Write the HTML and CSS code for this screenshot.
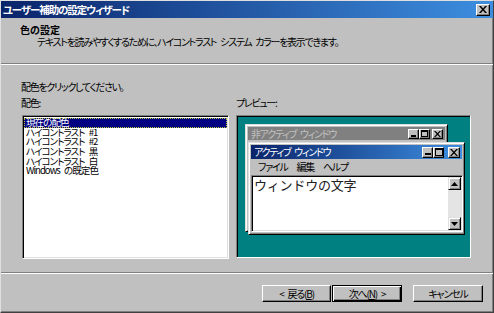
FILE: index.html
```html
<!DOCTYPE html>
<html lang="ja">
<head>
    <meta charset="UTF-8">
    <title>ユーザー補助の設定ウィザード</title>
    <link rel="stylesheet" href="styles.css">
</head>
<body>
    <div class="window">
        <div class="titlebar">
            <span class="title">ユーザー補助の設定ウィザード</span>
            <span class="cap-btn cap-close">
                <svg width="8" height="7" viewBox="0 0 8 7"><path d="M0 0h2l2 2.5L6 0h2L5 3.5 8 7H6L4 4.5 2 7H0l3-3.5z" fill="#000"/></svg>
            </span>
        </div>
        <div class="header">
            <div class="header-title">色の設定</div>
            <div class="header-sub">テキストを読みやすくするために、ハイコントラスト システム カラーを表示できます。</div>
        </div>
        <div class="sep"></div>
        <div class="content">
            <div class="prompt">配色をクリックしてください。</div>
            <div class="columns">
                <div class="col">
                    <div class="label">配色:</div>
                    <ul class="listbox">
                        <li class="selected">現在の配色</li>
                        <li>ハイコントラスト #1</li>
                        <li>ハイコントラスト #2</li>
                        <li>ハイコントラスト 黒</li>
                        <li>ハイコントラスト 白</li>
                        <li>Windows の既定色</li>
                    </ul>
                </div>
                <div class="col">
                    <div class="label">プレビュー:</div>
                    <div class="preview">
                        <div class="pwin pwin-inactive">
                            <div class="ptitle">
                                <span>非アクティブ ウィンドウ</span>
                                <span class="pbtns">
                                    <span class="mini-btn"><svg width="6" height="6" viewBox="0 0 6 6"><rect x="0" y="4" width="5" height="2" fill="#000"/></svg></span><span class="mini-btn"><svg width="7" height="7" viewBox="0 0 7 7"><path d="M0 0h7v7H0z M1 2v4h5V2z" fill="#000" fill-rule="evenodd"/></svg></span><span class="mini-btn mini-close"><svg width="7" height="6" viewBox="0 0 7 6"><path d="M0 0h1.5L3.5 2 5.5 0H7L4.3 3 7 6H5.5L3.5 4 1.5 6H0l2.7-3z" fill="#000"/></svg></span>
                                </span>
                            </div>
                        </div>
                        <div class="pwin pwin-active">
                            <div class="ptitle">
                                <span>アクティブ ウィンドウ</span>
                                <span class="pbtns">
                                    <span class="mini-btn"><svg width="6" height="6" viewBox="0 0 6 6"><rect x="0" y="4" width="6" height="2" fill="#000"/></svg></span><span class="mini-btn"><svg width="8" height="8" viewBox="0 0 8 8"><path d="M0 0h8v8H0z M1 2v5h6V2z" fill="#000" fill-rule="evenodd"/></svg></span><span class="mini-btn mini-close"><svg width="8" height="7" viewBox="0 0 8 7"><path d="M0 0h1.7L4 2.4 6.3 0H8L4.9 3.5 8 7H6.3L4 4.6 1.7 7H0l3.1-3.5z" fill="#000"/></svg></span>
                                </span>
                            </div>
                            <div class="pmenu">
                                <span>ファイル</span><span>編集</span><span>ヘルプ</span>
                            </div>
                            <div class="ptext">
                                <div class="ptext-body">ウィンドウの文字</div>
                                <div class="vscroll">
                                    <span class="arrow-btn"><svg width="7" height="4" viewBox="0 0 7 4"><path d="M3.5 0L7 4H0z" fill="#000"/></svg></span>
                                    <span class="track"></span>
                                    <span class="arrow-btn"><svg width="7" height="4" viewBox="0 0 7 4"><path d="M0 0h7L3.5 4z" fill="#000"/></svg></span>
                                </div>
                            </div>
                        </div>
                    </div>
                </div>
            </div>
        </div>
        <div class="sep sep-bottom"></div>
        <div class="buttons">
            <button class="btn btn-back">&lt; 戻る(<u>B</u>)</button>
            <button class="btn btn-default">次へ(<u>N</u>) &gt;</button>
            <button class="btn btn-cancel">キャンセル</button>
        </div>
    </div>
</body>
</html>
```

FILE: styles.css
```css
body {
    margin: 0;
    padding: 0;
    background-color: #c0c0c0;
    font-family: "Noto Sans CJK JP", "Noto Sans", sans-serif;
    font-size: 10px;
    font-feature-settings: "palt";
    letter-spacing: -1.3px;
    word-spacing: 3px;
    color: #000;
}
.window {
    width: 494px;
    height: 313px;
    box-sizing: border-box;
    background-color: #c0c0c0;
    border: 1px solid;
    border-color: #dfdfdf #404040 #404040 #dfdfdf;
    box-shadow: inset -1px -1px 0 #808080;
    display: flex;
    flex-direction: column;
}
.titlebar {
    height: 17px;
    background: linear-gradient(to right, #0a246a, #3d8ee0);
    display: flex;
    align-items: center;
    justify-content: space-between;
    padding: 0 3px 0 2px;
}
.title {
    color: #fff;
    font-weight: bold;
    font-size: 10.5px;
    letter-spacing: -1.1px;
    line-height: 17px;
}
.cap-btn {
    width: 12px;
    height: 10px;
    background-color: #c0c0c0;
    border: 1px solid;
    border-color: #fff #000 #000 #fff;
    box-shadow: inset -1px -1px 0 #808080;
    display: flex;
    align-items: center;
    justify-content: center;
}
.header {
    height: 45px;
    box-sizing: border-box;
    padding: 6px 0 0 19px;
    line-height: 12px;
}
.header-title {
    font-weight: bold;
    font-size: 10px;
    font-feature-settings: normal;
    letter-spacing: 0;
}
.header-sub {
    padding-left: 17px;
}
.sep {
    border-top: 1px solid #808080;
    border-bottom: 1px solid #fff;
}
.content {
    padding: 16px 0 0 20px;
    line-height: 12px;
}
.prompt {
    margin-bottom: 4px;
}
.columns {
    display: flex;
    gap: 7px;
}
.label {
    margin-bottom: 6px;
}
.listbox {
    list-style: none;
    margin: 0 0 0 1px;
    padding: 1px 1px;
    width: 207px;
    height: 144px;
    box-sizing: border-box;
    background-color: #fff;
    border: 1px solid;
    border-color: #808080 #fff #fff #808080;
    box-shadow: inset 1px 1px 0 #000, inset -1px -1px 0 #dfdfdf;
    font-size: 9.6px;
    line-height: 9.66px;
    letter-spacing: -1px;
}
.listbox li {
    padding: 0 2px;
    height: 9.66px;
}
.listbox li.selected {
    background-color: #000080;
    color: #fff;
    outline: 1px dotted #c0c040;
    outline-offset: -1px;
    margin-top: 1px;
}
.preview {
    position: relative;
    width: 235px;
    height: 143px;
    box-sizing: border-box;
    background-color: #008080;
    border: 1px solid;
    border-color: #808080 #fff #fff #808080;
    box-shadow: inset 1px 1px 0 #000;
}
.pwin {
    position: absolute;
    box-sizing: border-box;
    background-color: #c0c0c0;
    border: 1px solid;
    border-color: #dfdfdf #000 #000 #dfdfdf;
    box-shadow: inset 1px 1px 0 #fff, inset -1px -1px 0 #808080;
    padding: 2px;
    display: flex;
    flex-direction: column;
}
.pwin-inactive {
    left: 8px;
    top: 8px;
    width: 203px;
    height: 108px;
}
.pwin-active {
    left: 11px;
    top: 26px;
    width: 217px;
    height: 93px;
}
.ptitle {
    display: flex;
    align-items: center;
    justify-content: space-between;
    padding: 0 2px 0 3px;
    line-height: 13px;
    height: 13px;
}
.pwin-inactive .ptitle {
    background-color: #808080;
    color: #c0c0c0;
}
.pwin-active .ptitle {
    background: linear-gradient(to right, #0a246a, #3d8ee0);
    color: #fff;
    height: 14px;
    line-height: 14px;
}
.pbtns {
    display: flex;
}
.mini-btn {
    width: 9px;
    height: 8px;
    background-color: #c0c0c0;
    border: 1px solid;
    border-color: #fff #000 #000 #fff;
    box-shadow: inset -1px -1px 0 #808080;
    display: flex;
    align-items: center;
    justify-content: center;
}
.mini-close {
    margin-left: 2px;
}
.pwin-active .mini-btn {
    width: 9px;
    height: 9px;
}
.pwin-active .mini-close {
    width: 10px;
    margin-left: 4px;
}
.pmenu {
    display: flex;
    gap: 9px;
    padding: 0 7px;
    height: 16px;
    line-height: 16px;
}
.ptext {
    flex: 1;
    display: flex;
    background-color: #fff;
    border: 1px solid;
    border-color: #808080 #fff #fff #808080;
    box-shadow: inset 1px 1px 0 #000, inset -1px -1px 0 #dfdfdf;
    padding: 1px;
    margin-right: -1px;
}
.ptext-body {
    flex: 1;
    font-size: 13px;
    line-height: 16px;
    padding-left: 1px;
    font-feature-settings: normal;
    letter-spacing: -0.2px;
    color: #202020;
}
.vscroll {
    width: 13px;
    display: flex;
    flex-direction: column;
    background-color: #e4e4e4;
}
.arrow-btn {
    height: 11px;
    background-color: #c0c0c0;
    border: 1px solid;
    border-color: #dfdfdf #000 #000 #dfdfdf;
    box-shadow: inset 1px 1px 0 #fff, inset -1px -1px 0 #808080;
    display: flex;
    align-items: center;
    justify-content: center;
}
.track {
    flex: 1;
}
.sep-bottom {
    margin-top: 13px;
}
.buttons {
    display: flex;
    justify-content: flex-end;
    padding: 11px 10px 0 0;
}
.btn {
    font-family: inherit;
    font-size: 10px;
    font-feature-settings: "palt";
    letter-spacing: -1.2px;
    word-spacing: 3px;
    width: 70px;
    height: 17px;
    padding: 0;
    line-height: 13px;
    background-color: #c0c0c0;
    border: 1px solid;
    border-color: #fff #000 #000 #fff;
    box-shadow: inset -1px -1px 0 #808080;
    color: #000;
}
.btn-back {
    width: 69px;
}
.btn-default {
    border: 1px solid #000;
    box-shadow: inset 1px 1px 0 #fff, inset -1px -1px 0 #000, inset -2px -2px 0 #808080;
    margin-left: 1px;
}
.btn-cancel {
    margin-left: 11px;
}
```
